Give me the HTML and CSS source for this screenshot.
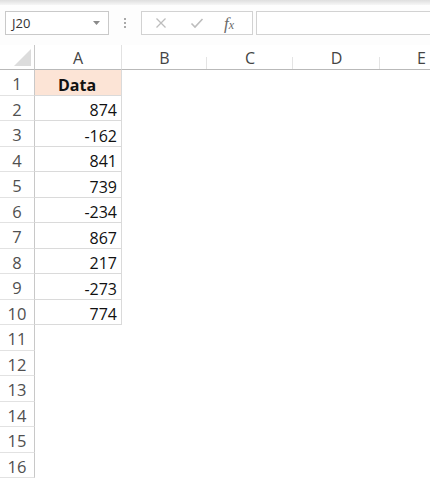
FILE: index.html
```html
<!DOCTYPE html>
<html>
<head>
<meta charset="utf-8">
<link rel="stylesheet" href="styles.css">
</head>
<body>
<div class="topstrip"></div>
<div class="toolbar">
  <div class="namebox">
    <span class="ref">J20</span>
    <svg class="caret" width="7" height="4" viewBox="0 0 7 4"><path d="M0 0h7L3.5 4z" fill="#8a8a8a"/></svg>
  </div>
  <div class="grip"><span></span><span></span><span></span></div>
  <div class="fxbox">
    <svg class="ic" width="12" height="12" viewBox="0 0 12 12"><path d="M1.5 1.5l9 9M10.5 1.5l-9 9" stroke="#bdbdbd" stroke-width="1.3" fill="none"/></svg>
    <svg class="ic" width="14" height="12" viewBox="0 0 14 12"><path d="M1.5 6.5l3.5 3.5 7.5-8" stroke="#bdbdbd" stroke-width="1.6" fill="none"/></svg>
    <span class="fx">f<small>x</small></span>
  </div>
  <div class="formula"></div>
</div>
<div class="sheet">
  <div class="corner"><div class="tri"></div></div>
  <div class="colh first">A</div>
  <div class="colh">B</div>
  <div class="colh tick">C</div>
  <div class="colh tick">D</div>
  <div class="colh tick last">E</div>

  <div class="rowh">1</div><div class="cell hdr">Data</div><div class="blank"></div>
  <div class="rowh">2</div><div class="cell num">874</div><div class="blank"></div>
  <div class="rowh">3</div><div class="cell num">-162</div><div class="blank"></div>
  <div class="rowh">4</div><div class="cell num">841</div><div class="blank"></div>
  <div class="rowh">5</div><div class="cell num">739</div><div class="blank"></div>
  <div class="rowh">6</div><div class="cell num">-234</div><div class="blank"></div>
  <div class="rowh">7</div><div class="cell num">867</div><div class="blank"></div>
  <div class="rowh">8</div><div class="cell num">217</div><div class="blank"></div>
  <div class="rowh">9</div><div class="cell num">-273</div><div class="blank"></div>
  <div class="rowh">10</div><div class="cell num">774</div><div class="blank"></div>
  <div class="rowh">11</div><div class="empty"></div><div class="blank"></div>
  <div class="rowh">12</div><div class="empty"></div><div class="blank"></div>
  <div class="rowh">13</div><div class="empty"></div><div class="blank"></div>
  <div class="rowh">14</div><div class="empty"></div><div class="blank"></div>
  <div class="rowh">15</div><div class="empty"></div><div class="blank"></div>
  <div class="rowh">16</div><div class="empty"></div><div class="blank"></div>
</div>
</body>
</html>
```
FILE: styles.css
```css
html, body {
  margin: 0;
  padding: 0;
  background: #ffffff;
  overflow: hidden;
}
body {
  font-family: "Open Sans", "Liberation Sans", sans-serif;
  color: #222;
  width: 430px;
  height: 480px;
}
.topstrip {
  height: 5px;
  background: linear-gradient(#dedede, #f6f6f6);
}
.toolbar {
  height: 40px;
  display: flex;
  align-items: flex-start;
  padding-top: 6px;
  box-sizing: border-box;
  background: #fdfdfd;
}
.namebox {
  margin-left: 5px;
  width: 104px;
  height: 24px;
  box-sizing: border-box;
  border: 1px solid #c9c9c9;
  background: #fff;
  display: flex;
  align-items: center;
  justify-content: space-between;
  padding: 0 8px 0 6px;
}
.ref {
  font-size: 13px;
  color: #333;
}
.grip {
  width: 32px;
  height: 24px;
  display: flex;
  flex-direction: column;
  align-items: center;
  justify-content: center;
  gap: 2px;
}
.grip span {
  width: 2px;
  height: 2px;
  background: #a9a9a9;
}
.fxbox {
  width: 112px;
  height: 24px;
  box-sizing: border-box;
  border: 1px solid #d2d2d2;
  background: #fff;
  display: flex;
  align-items: center;
  padding-left: 13px;
}
.fxbox .ic:first-child { margin-right: 23px; }
.fxbox .ic:nth-child(2) { margin-right: 20px; }
.fx {
  font-family: "Liberation Serif", serif;
  font-style: italic;
  font-size: 17px;
  line-height: 1;
  color: #6a6a6a;
}
.fx small { font-size: 12px; }
.formula {
  margin-left: 3px;
  flex: 1;
  height: 24px;
  box-sizing: border-box;
  border: 1px solid #d2d2d2;
  border-right: none;
  background: #fff;
}
.sheet {
  display: grid;
  width: 430px;
  grid-template-columns: 35px 87px 85px 86px 87px 1fr;
  grid-template-rows: 25px;
  grid-auto-rows: 25.5px;
}
.corner {
  border-right: 1px solid #c8c8c8;
  border-bottom: 1px solid #b9b9b9;
  position: relative;
}
.tri {
  position: absolute;
  right: 3px;
  bottom: 3px;
  width: 0;
  height: 0;
  border-left: 17px solid transparent;
  border-bottom: 17px solid #dcdcdc;
}
.colh {
  border-bottom: 1px solid #b9b9b9;
  display: flex;
  align-items: center;
  justify-content: center;
  font-size: 16px;
  color: #444;
  position: relative;
  padding-top: 2px;
}
.colh.last {
  justify-content: flex-start;
  padding-left: 37px;
}
.colh.first { border-right: 1px solid #e2e2e2; }
.colh.tick::before {
  content: "";
  position: absolute;
  left: -1px;
  bottom: 0;
  height: 12px;
  width: 1px;
  background: #e4e4e4;
}
.rowh {
  border-right: 1px solid #c8c8c8;
  border-bottom: 1px solid #e2e2e2;
  display: flex;
  align-items: center;
  justify-content: center;
  font-size: 16.5px;
  color: #505050;
  padding-top: 3px;
}
.cell {
  border-right: 1px solid #dadada;
  border-bottom: 1px solid #dadada;
  display: flex;
  align-items: center;
  font-size: 16px;
  color: #111;
  padding-top: 5px;
}
.cell.hdr {
  background: #fce4d6;
  justify-content: center;
  font-weight: 700;
  padding-right: 2px;
}
.cell.num {
  justify-content: flex-end;
  padding-right: 4px;
}
.blank { grid-column: 3 / 7; }
```
